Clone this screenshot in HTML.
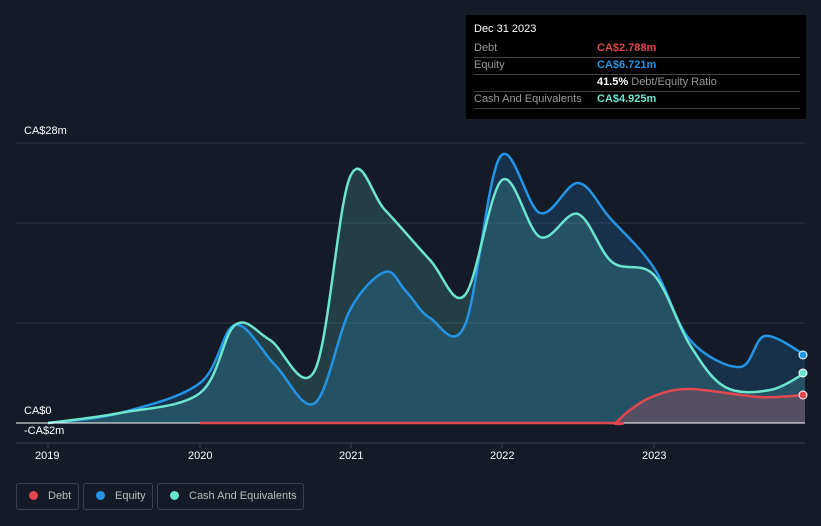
<!DOCTYPE html>
<html><head><meta charset="utf-8"><style>
body{margin:0;width:821px;height:526px;background:#151b26;font-family:"Liberation Sans",sans-serif;overflow:hidden;position:relative}
.t{position:absolute;color:#fff;font-size:11px}
.tip{position:absolute;left:466px;top:15px;width:340px;height:104px;background:#000;border-radius:2px}
.row{position:absolute;left:8px;width:326px;font-size:11px;color:#999;border-bottom:1px solid #444;height:17px;line-height:17px}
.row span{position:absolute;left:123px;font-weight:bold}
.leg{position:absolute;top:483px;height:27px;border:1px solid #3a404c;border-radius:3px;color:#bbb;font-size:11px;line-height:25px;box-sizing:border-box;white-space:nowrap}
.dot{display:inline-block;width:9px;height:9px;border-radius:50%;margin:0 10px 0 12px;vertical-align:-1px}
</style></head><body>
<svg width="821" height="526" style="position:absolute;left:0;top:0">
<line x1="16" y1="143" x2="805" y2="143" stroke="#2e3440"/>
<line x1="16" y1="223" x2="805" y2="223" stroke="#2e3440"/>
<line x1="16" y1="323" x2="805" y2="323" stroke="#2e3440"/>
<line x1="16" y1="443" x2="805" y2="443" stroke="#3a404c"/>
<g stroke="#3a404c"><line x1="48" y1="443" x2="48" y2="448"/><line x1="200" y1="443" x2="200" y2="448"/><line x1="351" y1="443" x2="351" y2="448"/><line x1="502" y1="443" x2="502" y2="448"/><line x1="654" y1="443" x2="654" y2="448"/></g>
<path id="ef" fill="rgba(33,150,243,0.18)"/>
<path id="cf" fill="rgba(100,230,210,0.18)"/>
<path id="df" fill="rgba(230,80,90,0.25)"/>
<path id="el" fill="none" stroke="#2394e6" stroke-width="2.5"/>
<path id="cl" fill="none" stroke="#6ce5cf" stroke-width="2.5"/>
<line x1="16" y1="423" x2="805" y2="423" stroke="#fff" stroke-width="1"/>
<path id="dl" fill="none" stroke="#e2474f" stroke-width="2.5"/>
<circle cx="803" cy="355" r="4" fill="#2394e6" stroke="#fff" stroke-width="1"/>
<circle cx="803" cy="373" r="4" fill="#6ce5cf" stroke="#fff" stroke-width="1"/>
<circle cx="803" cy="395" r="4" fill="#e2474f" stroke="#fff" stroke-width="1"/>
</svg>
<script>
function sm(p){var d="M"+p[0][0]+","+p[0][1];for(var i=0;i<p.length-1;i++){var a=p[i>0?i-1:0],b=p[i],c=p[i+1],e=p[i+2<p.length?i+2:i+1];var t=6;d+=" C"+(b[0]+(c[0]-a[0])/t)+","+(b[1]+(c[1]-a[1])/t)+" "+(c[0]-(e[0]-b[0])/t)+","+(c[1]-(e[1]-b[1])/t)+" "+c[0]+","+c[1];}return d;}
var E=[[48,423],[120,413],[200,383],[235,325],[275,365],[315,403],[350,310],[385,272],[405,290],[430,318],[465,325],[500,157],[540,213],[578,183],[610,218],[654,268],[690,340],[740,367],[765,336],[805,355]];
var C=[[48,423],[120,413],[200,393],[235,325],[270,340],[315,370],[350,177],[385,210],[430,260],[465,295],[502,180],[540,237],[578,214],[612,262],[654,275],[690,345],[725,387],[770,390],[805,373]];
var D=[[200,423],[400,423],[605,423],[615,423],[630,410],[654,396],[690,389],[760,397],[805,395]];
function s(id,v){document.getElementById(id).setAttribute("d",v);}
s("el",sm(E));s("ef",sm(E)+" L805,423 L48,423Z");
s("cl",sm(C));s("cf",sm(C)+" L805,423 L48,423Z");
s("dl",sm(D));s("df",sm(D)+" L805,423Z");
</script>
<div class="t" style="left:24px;top:125px">CA$28m</div>
<div class="t" style="left:24px;top:405px">CA$0</div>
<div class="t" style="left:24px;top:425px">-CA$2m</div>
<div class="t" style="left:35px;top:450px">2019</div>
<div class="t" style="left:188px;top:450px">2020</div>
<div class="t" style="left:339px;top:450px">2021</div>
<div class="t" style="left:490px;top:450px">2022</div>
<div class="t" style="left:642px;top:450px">2023</div>
<div class="tip">
<div style="position:absolute;left:8px;top:8px;color:#fff;font-size:11px">Dec 31 2023</div>
<div class="row" style="top:25px">Debt<span style="color:#e5454c">CA$2.788m</span></div>
<div class="row" style="top:42px">Equity<span style="color:#2394e6">CA$6.721m</span></div>
<div class="row" style="top:59px"><span style="color:#fff">41.5% <b style="color:#999;font-weight:normal">Debt/Equity Ratio</b></span></div>
<div class="row" style="top:76px">Cash And Equivalents<span style="color:#6ce5cf">CA$4.925m</span></div>
</div>
<div class="leg" style="left:16px;width:63px"><i class="dot" style="background:#e5454c"></i>Debt</div>
<div class="leg" style="left:83px;width:70px"><i class="dot" style="background:#2394e6"></i>Equity</div>
<div class="leg" style="left:157px;width:147px"><i class="dot" style="background:#6ce5cf"></i>Cash And Equivalents</div>
</body></html>
